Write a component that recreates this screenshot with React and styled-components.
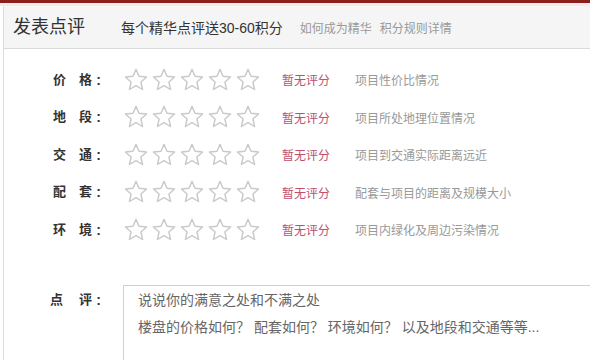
import React from 'react';
import styled, {createGlobalStyle} from 'styled-components';

const GlobalStyle=createGlobalStyle`
    html,body{
        margin:0;
        padding:0;
        background:#fff;
        overflow:hidden;
    }
    body{
        font-family:"Liberation Sans","Noto Sans CJK SC",sans-serif;
        color:#333;
    }
`;

const items=[
    {a:'价',b:'格',tip:'项目性价比情况'},
    {a:'地',b:'段',tip:'项目所处地理位置情况'},
    {a:'交',b:'通',tip:'项目到交通实际距离远近'},
    {a:'配',b:'套',tip:'配套与项目的距离及规模大小'},
    {a:'环',b:'境',tip:'项目内绿化及周边污染情况'},
];

const Star=()=>(
    <StarIcon viewBox="0 0 24 24">
        <polygon
            points="12,1.4 15,8.3 22.6,9 16.9,14 18.6,21.5 12,17.6 5.4,21.5 7.1,14 1.4,9 9,8.3"
            fill="none"
            stroke="#c9c9c9"
            strokeWidth="1.4"
            strokeLinejoin="round"
        />
    </StarIcon>
);

export default function App(){
    return(
        <>
            <GlobalStyle/>
            <TopLine/>
            <Panel>
                <Header>
                    <Title>发表点评</Title>
                    <Promo>每个精华点评送30-60积分</Promo>
                    <Links>
                        <LinkText>如何成为精华</LinkText>
                        <LinkText>积分规则详情</LinkText>
                    </Links>
                </Header>

                <Rows>
                    {items.map((it)=>(
                        <Row key={it.a}>
                            <Label>{it.a}<Gap/>{it.b}<Colon>:</Colon></Label>
                            <Stars>
                                {[0,1,2,3,4].map((i)=><Star key={i}/>)}
                            </Stars>
                            <Score>暂无评分</Score>
                            <Tip>{it.tip}</Tip>
                        </Row>
                    ))}
                </Rows>

                <CommentRow>
                    <Label top>点<Gap wide/>评<Colon>:</Colon></Label>
                    <CommentBox
                        placeholder={'说说你的满意之处和不满之处\n楼盘的价格如何？ 配套如何？ 环境如何？ 以及地段和交通等等...'}
                    />
                </CommentRow>
            </Panel>
        </>
    );
}

const TopLine=styled.div`
    height:3px;
    background:#8a1f1c;
    border-bottom:3px solid #fde6e8;
`;

const Panel=styled.div`
    margin-left:3px;
    border-left:1px solid #dcdcdc;
    height:354px;
`;

const Header=styled.div`
    display:flex;
    align-items:center;
    height:42px;
    padding-left:9px;
    background:#f5f5f5;
    border-bottom:1px solid #dadada;
`;

const Title=styled.h2`
    margin:0;
    font-size:18px;
    font-weight:normal;
    color:#333;
    line-height:42px;
    width:108px;
`;

const Promo=styled.span`
    font-size:14px;
    color:#333;
    margin-right:17px;
`;

const Links=styled.div`
    display:flex;
    gap:8px;
`;

const LinkText=styled.a`
    font-size:12px;
    color:#999;
    cursor:pointer;
`;

const Rows=styled.div`
    padding-top:12px;
`;

const Row=styled.div`
    display:flex;
    align-items:center;
    height:37.5px;
`;

const Label=styled.span`
    display:inline-flex;
    align-items:center;
    justify-content:flex-end;
    width:101px;
    flex:0 0 101px;
    align-self:${(p)=>p.top?'flex-start':'center'};
    margin-top:${(p)=>p.top?'5px':'0'};
    font-size:13px;
    font-weight:bold;
    color:#333;
    line-height:20px;
`;

const Colon=styled.span`
    display:inline-block;
    width:13px;
    text-align:center;
    font-size:14px;
`;

const Gap=styled.span`
    display:inline-block;
    width:${(p)=>p.wide?'16px':'13px'};
`;

const Stars=styled.div`
    display:flex;
    gap:4px;
    margin-left:19px;
`;

const StarIcon=styled.svg`
    width:24px;
    height:24px;
    display:block;
`;

const Score=styled.span`
    width:73px;
    margin-left:22px;
    font-size:12px;
    color:#c0506e;
`;

const Tip=styled.span`
    font-size:12px;
    color:#999;
`;

const CommentRow=styled.div`
    display:flex;
    margin-top:36px;
`;

const CommentBox=styled.textarea`
    margin-left:18px;
    flex:1 1 auto;
    height:80px;
    padding:1px 14px;
    border:1px solid #d0d0d0;
    border-right:none;
    box-sizing:border-box;
    resize:none;
    outline:none;
    font-family:"Liberation Sans","Noto Sans CJK SC",sans-serif;
    font-size:14px;
    line-height:27px;
    &::placeholder{
        color:#666;
    }
`;
